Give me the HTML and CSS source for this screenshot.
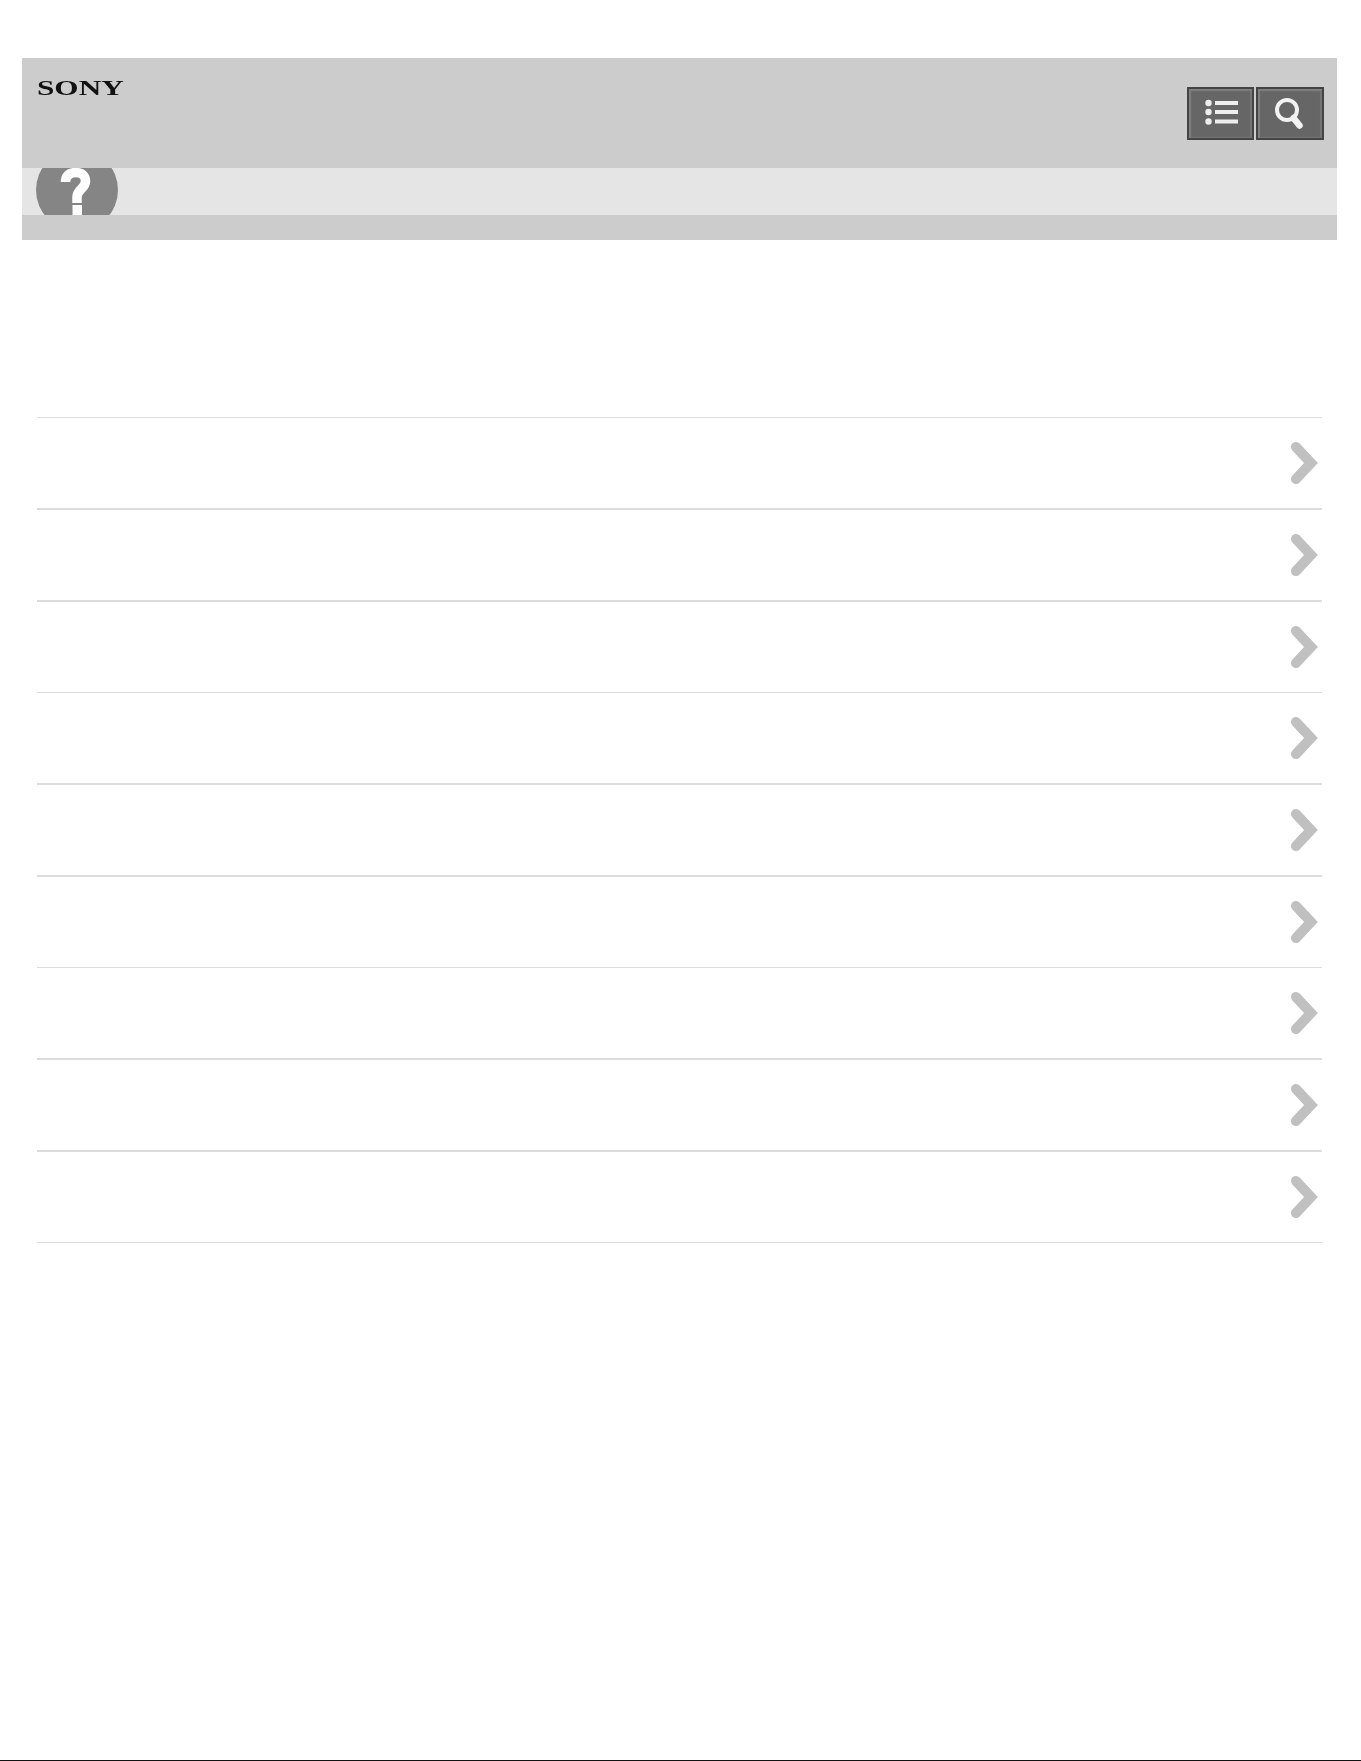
FILE: index.html
```html
<!DOCTYPE html>
<html>
<head>
  <title>Help Guide</title>
  <meta charset="UTF-8">
  <link rel="stylesheet" href="styles.css">
</head>
<body>
  <svg class="defs" width="0" height="0">
    <symbol id="chevron" viewBox="0 0 30 44">
      <path d="M6 6L21 22L6 38" fill="none" stroke="#c0c0c0" stroke-width="10" stroke-linecap="round"/>
    </symbol>
  </svg>
  <div class="header">
    <div class="top-band">
      <span class="logo">SONY</span>
      <div class="buttons">
        <div class="btn">
          <svg width="39" height="29" viewBox="0 0 39 29">
            <circle cx="7.5" cy="4" r="3.2" fill="#eee"/><circle cx="7.5" cy="13" r="3.2" fill="#eee"/><circle cx="7.5" cy="22.5" r="3.2" fill="#eee"/>
            <path d="M14 4h23M14 13h23M14 22.5h23" stroke="#eee" stroke-width="4"/>
          </svg>
        </div>
        <div class="btn btn-wide">
          <svg width="30" height="33" viewBox="0 0 30 33">
            <circle cx="12" cy="13" r="10" fill="none" stroke="#f2f2f2" stroke-width="4"/>
            <path d="M18.5 21l6 7.5" stroke="#f2f2f2" stroke-width="6.5" stroke-linecap="round"/>
          </svg>
        </div>
      </div>
    </div>
    <div class="title-band">
      <svg class="help-icon" width="82" height="82" viewBox="0 0 82 82">
        <circle cx="41" cy="41" r="41" fill="#858585"/>
        <path d="M29.5 33C29.5 27 33 23.5 40 23.5C46 23.5 49.5 27 49.5 32C49.5 40 41 40 41 48V54" fill="none" stroke="#fff" stroke-width="9.5"/>
        <rect x="36.5" y="56" width="9.5" height="12" fill="#fff"/>
      </svg>
    </div>
    <div class="bottom-band"></div>
  </div>
  <ul class="list">
    <li class="row"><svg class="chevron" width="30" height="44"><use href="#chevron"/></svg></li>
    <li class="row"><svg class="chevron" width="30" height="44"><use href="#chevron"/></svg></li>
    <li class="row"><svg class="chevron" width="30" height="44"><use href="#chevron"/></svg></li>
    <li class="row"><svg class="chevron" width="30" height="44"><use href="#chevron"/></svg></li>
    <li class="row"><svg class="chevron" width="30" height="44"><use href="#chevron"/></svg></li>
    <li class="row"><svg class="chevron" width="30" height="44"><use href="#chevron"/></svg></li>
    <li class="row"><svg class="chevron" width="30" height="44"><use href="#chevron"/></svg></li>
    <li class="row"><svg class="chevron" width="30" height="44"><use href="#chevron"/></svg></li>
    <li class="row"><svg class="chevron" width="30" height="44"><use href="#chevron"/></svg></li>
  </ul>
  <div class="page-end"></div>
</body>
</html>
```

FILE: styles.css
```css
html, body {
  margin: 0;
  padding: 0;
  background: #fff;
  font-family: "Liberation Sans", Arial, sans-serif;
}
body {
  height: 1761px;
  display: flex;
  flex-direction: column;
  padding: 58px 24px 0 22px;
  box-sizing: border-box;
}
.defs {
  display: none;
}
.header {
  height: 182px;
  background: #cccccc;
}
.top-band {
  height: 110px;
  display: flex;
  justify-content: space-between;
  align-items: flex-start;
  padding: 20px 13px 0 15px;
  box-sizing: border-box;
}
.logo {
  display: block;
  width: 61px;
  font-family: "Liberation Serif", serif;
  font-weight: bold;
  font-size: 22px;
  line-height: 20px;
  color: #111;
  transform: scaleX(1.42);
  transform-origin: left top;
}
.buttons {
  display: flex;
  gap: 2px;
  margin-top: 9px;
}
.btn {
  width: 67px;
  height: 53px;
  box-sizing: border-box;
  background: #666;
  border: 2px solid #444;
  box-shadow: inset 2px 2px 1px #808080, inset -2px -1px 1px #757575;
  display: flex;
  align-items: center;
  justify-content: center;
}
.btn svg {
  filter: blur(0.4px);
}
.btn-wide {
  width: 68px;
}
.title-band {
  height: 47px;
  background: #e5e5e5;
  overflow: hidden;
  display: flex;
  align-items: center;
  padding-left: 14px;
}
.help-icon {
  flex: none;
  margin-bottom: 3px;
  filter: blur(0.5px);
}
.bottom-band {
  height: 25px;
}
.list {
  list-style: none;
  margin: 177px 15px 0 15px;
  padding: 0;
  border-top: 1px solid #dcdcdc;
}
.row {
  height: 90px;
  border-bottom: 2px solid #dcdcdc;
  display: flex;
  align-items: center;
  justify-content: flex-end;
}
.row:nth-child(3n) {
  border-bottom-width: 1px;
}
.chevron {
  margin-right: 2px;
  filter: blur(0.7px);
}
.page-end {
  margin: auto -24px 0 -22px;
  height: 1px;
  background: #111;
}
```
